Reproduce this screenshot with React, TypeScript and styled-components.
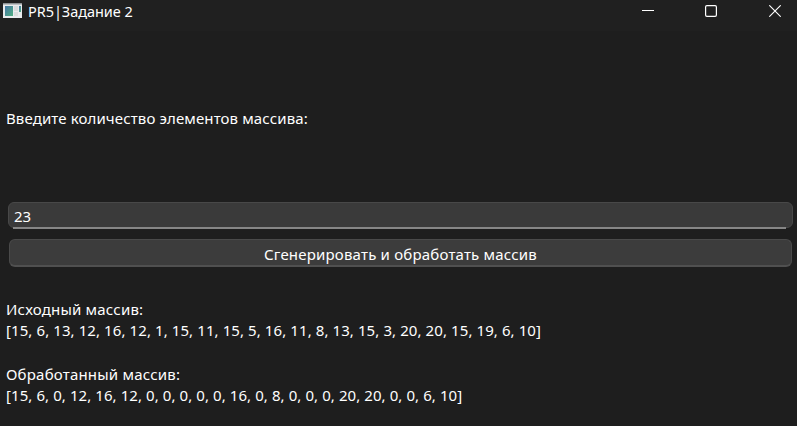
import React, { useState } from "react";
import styled, { createGlobalStyle } from "styled-components";

const GlobalStyle = createGlobalStyle`
  * { box-sizing: border-box; }
  body { margin: 0; background: #1e1e1e; overflow: hidden; }
`;

const Window = styled.div`
  display: flex;
  flex-direction: column;
  width: 797px;
  height: 426px;
  background: #1e1e1e;
  color: #fff;
  font-family: "Noto Sans", "Open Sans", sans-serif;
  font-size: 15px;
`;

const TitleBar = styled.header`
  display: flex;
  align-items: flex-start;
  height: 31px;
  flex: none;
  background: #202020;
`;

const AppIcon = styled.svg`
  margin: 3px 0 0 3px;
  flex: none;
`;

const Title = styled.h1`
  margin: 0 0 0 6px;
  flex: 1;
  font-size: 14.5px;
  font-weight: 400;
  line-height: 22px;
  letter-spacing: -0.05px;
`;

const Controls = styled.div`
  display: flex;
  margin-right: -10px;
`;

const ControlButton = styled.button<{ $width: number }>`
  width: ${(p) => p.$width}px;
  height: 22px;
  padding: 0;
  border: 0;
  background: none;
  color: #fff;
  display: flex;
  align-items: center;
  justify-content: center;
`;

const Body = styled.main`
  display: flex;
  flex-direction: column;
  flex: 1;
`;

const Line = styled.div<{ $spacing: number }>`
  height: 21px;
  line-height: 21px;
  letter-spacing: ${(p) => p.$spacing}px;
  white-space: pre;
`;

const Prompt = styled.label`
  display: block;
  margin: 77px 0 73px 6px;
`;

const Field = styled.div`
  display: flex;
  flex-direction: column;
  height: 27px;
  margin: 0 4px 0 8px;
`;

const Input = styled.input`
  height: 26px;
  flex: none;
  padding: 2px 0 0 5px;
  border: 1px solid #484848;
  border-radius: 6px;
  outline: 0;
  background: #3a3a3a;
  color: #fff;
  font: inherit;
`;

const Underline = styled.div`
  height: 2px;
  flex: none;
  margin: -1px 7px 0 5px;
  background: #868686;
  z-index: 1;
`;

const Button = styled.button`
  height: 28px;
  flex: none;
  margin: 10px 5px 0 9px;
  padding: 2px 0 0;
  border: 1px solid #4a4a4a;
  border-bottom: 2px solid #505050;
  border-radius: 6px;
  background: #3c3c3c;
  color: #fff;
  font: inherit;
  letter-spacing: 0.19px;
`;

const Result = styled.section<{ $top: number }>`
  margin: ${(p) => p.$top}px 0 0 6px;
`;

export default function App() {
  const [count, setCount] = useState("23");
  return (
    <Window>
      <GlobalStyle />
      <TitleBar>
        <AppIcon width="19" height="16" viewBox="0 0 19 16">
          <defs>
            <linearGradient id="screen" x1="0" y1="0" x2="1" y2="1">
              <stop offset="0" stopColor="#4576a5" />
              <stop offset="1" stopColor="#50ae81" />
            </linearGradient>
          </defs>
          <rect width="19" height="15" fill="#e9ebed" />
          <rect width="19" height="1.5" fill="#8d9193" />
          <rect x="2" y="3" width="8" height="10" fill="url(#screen)" />
          <rect x="11" y="3" width="4" height="5" fill="#dadcdd" />
          <rect x="11" y="9" width="4" height="4" fill="#dadcdd" />
          <rect x="16" y="3" width="2" height="6" fill="url(#screen)" />
        </AppIcon>
        <Title>PR5|Задание 2</Title>
        <Controls>
          <ControlButton $width={62} aria-label="Свернуть">
            <svg width="12" height="12"><path d="M0 5.5H12" stroke="currentColor" /></svg>
          </ControlButton>
          <ControlButton $width={64} aria-label="Развернуть">
            <svg width="12" height="12" fill="none"><rect x=".6" y=".6" width="10.8" height="10.8" rx="1.3" stroke="currentColor" strokeWidth="1.2" /></svg>
          </ControlButton>
          <ControlButton $width={64} aria-label="Закрыть">
            <svg width="12" height="12"><path d="M.3 .3L11.7 11.7M11.7 .3L.3 11.7" stroke="currentColor" strokeWidth="1.1" /></svg>
          </ControlButton>
        </Controls>
      </TitleBar>
      <Body>
        <Prompt htmlFor="count">
          <Line $spacing={0.12}>Введите количество элементов массива:</Line>
        </Prompt>
        <Field>
          <Input id="count" value={count} onChange={(e) => setCount(e.target.value)} />
          <Underline />
        </Field>
        <Button>Сгенерировать и обработать массив</Button>
        <Result $top={32}>
          <Line $spacing={0.2}>Исходный массив:</Line>
          <Line $spacing={0.09}>[15, 6, 13, 12, 16, 12, 1, 15, 11, 15, 5, 16, 11, 8, 13, 15, 3, 20, 20, 15, 19, 6, 10]</Line>
        </Result>
        <Result $top={23}>
          <Line $spacing={0.2}>Обработанный массив:</Line>
          <Line $spacing={0.08}>[15, 6, 0, 12, 16, 12, 0, 0, 0, 0, 0, 16, 0, 8, 0, 0, 0, 20, 20, 0, 0, 6, 10]</Line>
        </Result>
      </Body>
    </Window>
  );
}
